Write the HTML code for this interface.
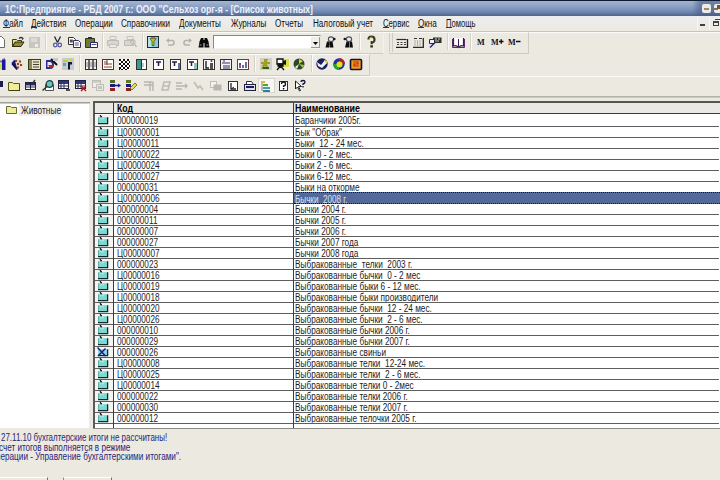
<!DOCTYPE html>
<html><head><meta charset="utf-8">
<style>
*{margin:0;padding:0;box-sizing:border-box}
html,body{width:720px;height:480px;overflow:hidden;background:#ece9e0;font-family:"Liberation Sans",sans-serif;font-size:10px;color:#000}
.a{position:absolute}
.t{display:inline-block;transform-origin:0 0;white-space:pre}
#title{left:0;top:0;width:720px;height:16px;background:linear-gradient(#0d1a33 0,#0d1a33 1px,#a6b5cd 1px,#93a7c6 5px,#7f97bf 9px,#6a80a8 13px,#556a92 15px,#556a92 16px)}
#title .t{position:absolute;left:5px;top:3px;font-weight:bold;font-size:11px;line-height:12px;color:#eef2fa;transform:scaleX(0.784)}
#menu{left:0;top:16px;width:720px;height:15px;background:linear-gradient(#eceef0,#ece9e0)}
#menu .t{position:absolute;top:2px;line-height:11px;transform:scaleX(0.81);color:#111}
#mline{left:0;top:31px;width:720px;height:1px;background:#c8c5ba}
#mline2{left:0;top:32px;width:720px;height:1px;background:#fbfaf6}
.hl{left:0;width:720px;height:1px}
.vl{width:1px}
#tree{left:0;top:104px;width:89px;height:324px;background:#fff}
#grid{left:93px;top:101px;width:627px;height:328px;background:#fff;border-left:2px solid;border-top:2px solid;border-color:#555 #555 #555 #5a5a5a}
#hdr{left:95px;top:103px;width:625px;height:10px;background:#ebe9e3}
.r{position:absolute;left:0;width:720px;height:11px}
.r .ic{position:absolute;left:95px;top:0;width:18px;height:11px;background:#f6f4f0}
.r .fi{position:absolute;left:2px;top:0px}
.r .c1 .t{color:#1c1c1c;position:absolute;left:117px;top:0px;line-height:11px;transform:scaleX(0.82)}
.r .c2 .t{color:#1c1c1c;position:absolute;left:295px;top:0px;line-height:11px;transform:scaleX(0.825)}
.rl{left:94px;width:625px;background:#5e5e5e}
.selbox{position:absolute;left:294px;width:426px;background:#52699a;border-top:1px dotted #101820;border-bottom:1px dotted #101820;z-index:2}
.selbox .t{position:absolute;left:1px;top:1px;line-height:11px;color:#d8e2f0;transform:scaleX(0.81)}
.tb{border-top:1px solid #fbfaf6;border-right:1px solid #cfccc2;border-bottom:1px solid #cfccc2}
.tb3{border-top:1px solid #fbfaf6}
.sep{width:2px;height:17px;border-left:1px solid #d4d2ca;border-right:1px solid #fbfaf6}
.mm{font-family:"Liberation Serif",serif;font-weight:bold;font-size:9px;line-height:11px;color:#101010;transform:scaleX(0.9);transform-origin:0 0}
svg.a{overflow:visible}
.msg{left:2px;line-height:10px;color:#27277a;transform-origin:0 0}
</style></head><body>
<div id="title" class="a"><span class="t">1С:Предприятие - РБД 2007 г.: ООО "Сельхоз орг-я - [Список животных]</span></div>
<div class="a" style="left:692px;top:1px;width:28px;height:15px;background:linear-gradient(90deg,rgba(70,90,135,0),rgba(70,90,135,.55) 8px)"></div>
<div class="a" style="left:702px;top:4px;width:9px;height:9px;border-radius:2px;background:#ecebe8"><div class="a" style="left:2px;top:4px;width:5px;height:2px;background:#a08a6a"></div></div>
<div class="a" style="left:714px;top:4px;width:9px;height:9px;border-radius:2px;background:#ecebe8"><div class="a" style="left:0px;top:4px;width:4px;height:2px;background:#8a7050"></div><div class="a" style="left:3px;top:1px;width:3px;height:4px;background:#6a5a40"></div></div>
<div id="menu" class="a">
<span class="t" style="left:3px">Файл</span>
<span class="t" style="left:31px">Действия</span>
<span class="t" style="left:75px">Операции</span>
<span class="t" style="left:121px">Справочники</span>
<span class="t" style="left:179px">Документы</span>
<span class="t" style="left:231px">Журналы</span>
<span class="t" style="left:275px">Отчеты</span>
<span class="t" style="left:313px">Налоговый учет</span>
<span class="t" style="left:383px;transform:scaleX(0.77)">Сервис</span>
<span class="t" style="left:418px">Окна</span>
<span class="t" style="left:446px;transform:scaleX(0.76)">Помощь</span>
<div class="a" style="left:3px;top:11px;width:7px;height:1px;background:#333"></div>
<div class="a" style="left:31px;top:11px;width:6px;height:1px;background:#333"></div>
<div class="a" style="left:383px;top:11px;width:6px;height:1px;background:#333"></div>
<div class="a" style="left:418px;top:11px;width:6px;height:1px;background:#333"></div>
<div class="a" style="left:446px;top:11px;width:6px;height:1px;background:#333"></div>
</div>
<div class="a" style="left:697px;top:17px;width:1px;height:13px;background:#f8f8f4"></div>
<div class="a" style="left:709px;top:17px;width:1px;height:13px;background:#f8f8f4"></div>
<div class="a" style="left:700px;top:24px;width:5px;height:2px;background:#404040"></div>
<div class="a" style="left:713px;top:21px;width:6px;height:5px;border:1px solid #404040;border-top-width:2px"></div>
<div class="a" style="left:715px;top:19px;width:5px;height:1px;background:#404040"></div>
<div id="mline" class="a"></div><div id="mline2" class="a"></div>
<!-- toolbar row separators -->
<div class="a hl" style="top:96px;background:#b4b2aa"></div>
<div class="a hl" style="top:97px;background:#cac8c0"></div>
<div class="a hl" style="top:102px;width:90px;background:#a09e98"></div>
<div class="a hl" style="top:103px;width:90px;background:#d0cec8"></div>

<!-- toolbar 1 -->
<div class="a tb" style="left:0;top:32px;width:384px;height:22px;border-right-color:#f4f2ec"></div>
<div class="a tb" style="left:389px;top:32px;width:140px;height:22px"></div>
<div class="a" style="left:389px;top:33px;width:1px;height:19px;background:#cdcac2"></div>
<div class="a" style="left:392px;top:33px;width:1px;height:19px;background:#cdcac2"></div>
<div class="a sep" style="left:45px;top:33px"></div>
<div class="a sep" style="left:102px;top:33px"></div>
<div class="a sep" style="left:142px;top:33px"></div>
<div class="a sep" style="left:359px;top:33px"></div>
<div class="a sep" style="left:447px;top:33px"></div>
<div class="a sep" style="left:470px;top:33px"></div>
<!-- new -->
<svg class="a" style="left:-6px;top:36px" width="12" height="12"><path d="M1.5 0.5h6l3 3v8h-9z" fill="#fff" stroke="#6a6a6a"/></svg>
<!-- open -->
<svg class="a" style="left:12px;top:36px" width="12" height="12"><path d="M0.5 3.5h4l1 1h4v2h-6l-3 4z" fill="#e8e890" stroke="#3a3a10"/><path d="M0.5 10.5l2.5-4.5h9l-3 4.5z" fill="#8c8c30" stroke="#2a2a10"/><path d="M7 2.5q2-2 4 0l-1 1" fill="none" stroke="#303060" stroke-width="1.2"/></svg>
<!-- save gray -->
<svg class="a" style="left:29px;top:37px" width="11" height="11"><rect x="0" y="0" width="11" height="11" fill="#c8c6c0"/><rect x="2" y="1" width="6" height="4" fill="#dcdad4"/><rect x="6" y="7" width="3" height="3" fill="#f0eee8"/></svg>
<!-- scissors -->
<svg class="a" style="left:53px;top:36px" width="9" height="12"><path d="M1.5 0.5l3 6M7.5 0.5l-3 6" stroke="#202030" stroke-width="1.3"/><circle cx="2.3" cy="9" r="1.8" fill="none" stroke="#5050a0" stroke-width="1.2"/><circle cx="6.7" cy="9" r="1.8" fill="none" stroke="#5050a0" stroke-width="1.2"/></svg>
<!-- copy -->
<svg class="a" style="left:68px;top:37px" width="13" height="11"><path d="M0.5 0.5h5l2 2v5h-7z" fill="#fff" stroke="#303030"/><path d="M1.8 2.5h3v3h-3z" fill="#505050"/><path d="M5.5 3.5h5l2 2v5h-7z" fill="#fff" stroke="#303050"/><path d="M6.8 6h4M6.8 8h4" stroke="#505080"/></svg>
<!-- paste -->
<svg class="a" style="left:85px;top:37px" width="13" height="11"><path d="M0.5 1.5h9v9h-9z" fill="#6b7a3a" stroke="#303818"/><rect x="3" y="0" width="4" height="2" fill="#303030"/><path d="M5.5 5.5h7v5h-7z" fill="#fff" stroke="#282860"/><path d="M6.5 7.5h5" stroke="#4a4a90"/></svg>
<!-- print gray -->
<svg class="a" style="left:107px;top:36px" width="13" height="12"><path d="M3 0.5h6v3h-6z" fill="#eceae4" stroke="#c4c2bc"/><path d="M0.5 4.5h11v5h-11z" fill="#d8d6d0" stroke="#bcbab4"/><path d="M2.5 8.5h7v3h-7z" fill="#eceae4" stroke="#c4c2bc"/></svg>
<svg class="a" style="left:124px;top:36px" width="13" height="12"><path d="M3 0.5h6v3h-6z" fill="#eceae4" stroke="#c4c2bc"/><path d="M0.5 4.5h9v5h-9z" fill="#d8d6d0" stroke="#bcbab4"/><circle cx="9" cy="6" r="2.3" fill="none" stroke="#b8b6b0"/><path d="M10.5 8l2 3" stroke="#b8b6b0" stroke-width="1.3"/></svg>
<!-- filter -->
<svg class="a" style="left:147px;top:36px" width="12" height="12"><rect x="0.5" y="0.5" width="11" height="11" fill="#8cc8d8" stroke="#1e2a34"/><path d="M1 1h4v10h-4z" fill="#b8e0ec"/><path d="M3 2.5h6l-2 3v4h-2v-4z" fill="#a8c830" stroke="#4a6010" stroke-width="0.8"/><rect x="4" y="1" width="4" height="1.5" fill="#d07020"/></svg>
<!-- undo/redo gray -->
<svg class="a" style="left:166px;top:38px" width="9" height="8"><path d="M1 2.5h5q2 0 2 2.2t-2 2.3h-4" fill="none" stroke="#b4b2ac" stroke-width="1.6"/><path d="M0 2.5l3-2.5v5z" fill="#b4b2ac"/></svg>
<svg class="a" style="left:183px;top:38px" width="9" height="8"><path d="M8 2.5h-5q-2 0-2 2.2t2 2.3h4" fill="none" stroke="#b4b2ac" stroke-width="1.6"/><path d="M9 2.5l-3-2.5v5z" fill="#b4b2ac"/></svg>
<!-- binoculars -->
<svg class="a" style="left:198px;top:37px" width="12" height="11"><path d="M0.5 10.5l1-6 1.5-3.5h2.5v9.5zM11.5 10.5l-1-6-1.5-3.5h-2.5v9.5z" fill="#0a0a0a"/><rect x="5" y="3" width="2" height="3" fill="#0a0a0a"/><path d="M1.5 8h2M8.5 8h2" stroke="#9a9a9a"/></svg>
<!-- combo -->
<div class="a" style="left:213px;top:35px;width:108px;height:14px;background:#fff;border-top:1px solid #8a8880;border-left:1px solid #8a8880;border-right:1px solid #e8e6e0;border-bottom:1px solid #f4f2ec"></div>
<div class="a" style="left:311px;top:37px;width:9px;height:11px;background:#f0eee8;border-right:1px solid #9a988f;border-bottom:1px solid #9a988f"></div>
<svg class="a" style="left:313px;top:42px" width="6" height="3"><path d="M0 0h5l-2.5 3z" fill="#000"/></svg>
<!-- binoc arrows -->
<svg class="a" style="left:325px;top:36px" width="12" height="12"><path d="M0.5 11.5l1.5-6h2.5v6zM8.5 11.5l-1-6h-2.5v6z" fill="#0c0c0c"/><path d="M4 6v3h1v-3z" fill="#404040"/><ellipse cx="6" cy="3.2" rx="2.6" ry="2.3" fill="none" stroke="#505060" stroke-width="1.1"/><circle cx="9.3" cy="3" r="1.3" fill="#101030"/></svg>
<svg class="a" style="left:343px;top:36px" width="12" height="12"><path d="M2 11.5l1.5-6h2.5v6zM10 11.5l-1-6h-2.5v6z" fill="#0c0c0c"/><ellipse cx="6" cy="3.2" rx="2.6" ry="2.3" fill="none" stroke="#505060" stroke-width="1.1"/><circle cx="1.8" cy="3" r="1.3" fill="#101030"/></svg>
<!-- ? -->
<svg class="a" style="left:367px;top:36px" width="9" height="12"><path d="M1.5 3.5q0-3 3-3t3 3-2.8 2.7v2" fill="none" stroke="#3e3e14" stroke-width="2.2"/><path d="M2.5 3q0.5-1.8 2-1.8" fill="none" stroke="#c8c060" stroke-width="0.8"/><rect x="3.3" y="9.3" width="2.6" height="2.2" fill="#2a2a0a"/></svg>
<!-- calc -->
<svg class="a" style="left:396px;top:38px" width="12" height="10"><path d="M0.5 1.5h10" stroke="#2a2a2a" stroke-width="1.2"/><path d="M1 4.5h2M4.5 4.5h2M8 4.5h2M1 6.5h2M4.5 6.5h2M8 6.5h2" stroke="#404040" stroke-width="1.1"/><path d="M0 9.3h11.5V1" fill="none" stroke="#1e1e1e" stroke-width="1.3"/></svg>
<svg class="a" style="left:413px;top:37px" width="11" height="11"><path d="M1 1.5h3M6 1.5h3" stroke="#303030" stroke-width="1.2"/><path d="M1.5 4h1M4 4h1M6.5 4h1M1.5 6h1M4 6h1M6.5 6h1M1.5 8h1M4 8h1M6.5 8h1" stroke="#707070"/><path d="M0 10.3h10.3V1" fill="none" stroke="#2a2a2a" stroke-width="1.3"/></svg>
<svg class="a" style="left:429px;top:37px" width="13" height="11"><path d="M4 0.5h8.5v5.5h-6l-2 2v-2h-0.5z" fill="#2e2e2e"/><path d="M6 2h2M9 2h2M6 4h4" stroke="#c8c8c8"/><path d="M0.5 2.5h5v4h-5z" fill="#f0f0f0" stroke="#2a2a2a"/><path d="M1 10.5l3.5-3.5" stroke="#2a2a9a" stroke-width="1.6"/></svg>
<!-- book -->
<svg class="a" style="left:452px;top:37px" width="13" height="11"><path d="M1.5 1v8q3-1 5 1.5 2-2.5 5-1.5v-8" fill="#fff" stroke="#3a1a4a" stroke-width="1.2"/><path d="M6.5 2v8" stroke="#3a1a4a"/><path d="M0.5 2v8.5h12v-8.5" fill="none" stroke="#5a2a6a"/></svg>
<!-- M -->
<div class="a mm" style="left:477px;top:37px">M</div>
<div class="a mm" style="left:491px;top:37px">M</div><svg class="a" style="left:499px;top:39px" width="5" height="5"><path d="M0 2.5h4.5M2.25 0.3v4.4" stroke="#101010" stroke-width="1.4"/></svg>
<div class="a mm" style="left:508px;top:37px">M</div><svg class="a" style="left:516px;top:40px" width="5" height="3"><path d="M0 1.5h4.5" stroke="#101010" stroke-width="1.5"/></svg>

<!-- toolbar row 2 -->
<div class="a tb" style="left:0;top:54px;width:370px;height:22px"></div>
<div class="a sep" style="left:79px;top:55px"></div>
<div class="a sep" style="left:254px;top:55px"></div>
<div class="a sep" style="left:311px;top:55px"></div>
<svg class="a" style="left:-6px;top:59px" width="12" height="11"><path d="M8 0.5h3.5v10.5h-3.5z" fill="#1818a0"/><path d="M8 0l3-0.5v1z" fill="#101060"/><path d="M0 1.5h8v2h-8z" fill="#707a80"/><path d="M2 4.5h6v6h-6z" fill="#c8e060"/></svg>
<svg class="a" style="left:11px;top:58px" width="13" height="12"><path d="M3 1.5l5-1 4.5 6.5-6 4.5z" fill="#e8d8c8"/><path d="M4 2h2v2h-2zM8 2.5h2v2h-2zM6 5h2v2h-2zM9 6h2v2h-2zM6 8.5h2v2h-2z" fill="#8a4a30"/><path d="M0.5 5l3-3.5 3 10z" fill="#1a1a7a"/><path d="M1 5.5l5 6" stroke="#0a0a50" stroke-width="1.6"/></svg>
<svg class="a" style="left:28px;top:59px" width="13" height="11"><rect x="0.5" y="0.5" width="12" height="10" fill="#e8e6c8" stroke="#3a3a20"/><rect x="1" y="1" width="3" height="9" fill="#8a8a50"/><path d="M5 3h6M5 5.5h6M5 8h6" stroke="#404030"/></svg>
<svg class="a" style="left:45px;top:58px" width="13" height="12"><path d="M1 2h4q4 0 4 4.5t-4 4.5h-4z" fill="#2a2aa0"/><path d="M2.5 4h2q2.5 0 2.5 2.5t-2.5 2.5h-2z" fill="#f0f0f0"/><path d="M3 7l3 4 3-4z" fill="#c02020"/><path d="M6 1l6 6" stroke="#101010" stroke-width="2"/><rect x="8" y="0" width="5" height="3" fill="#c8c8c8"/></svg>
<svg class="a" style="left:62px;top:58px" width="12" height="12"><rect x="0" y="0" width="12" height="12" fill="#c8cad0"/><path d="M1 2h4l1 2h-5z" fill="#b0d040"/><path d="M1 5h3v3h-3z" fill="#60a8b0"/><path d="M6 4h4v2.5h-2v5h-2z" fill="#101840"/><path d="M7 0h3v3h-3z" fill="#d0d840"/></svg>
<svg class="a" style="left:85px;top:59px" width="12" height="11"><rect x="0.5" y="0.5" width="11" height="10" fill="#f0f0f0" stroke="#303030"/><path d="M4 1v9M8 1v9" stroke="#303030" stroke-width="1.4"/><path d="M2 3v5M6 3v5M10 3v5" stroke="#8a8a8a"/></svg>
<svg class="a" style="left:102px;top:59px" width="12" height="11"><rect x="0.5" y="0.5" width="11" height="10" fill="#fff" stroke="#4a3030"/><path d="M2 3h3M2 5h8M2 8h8" stroke="#904030" stroke-width="1.2"/><path d="M5 1v5" stroke="#5a3a3a"/></svg>
<svg class="a" style="left:119px;top:59px" width="11" height="11"><rect width="11" height="11" fill="#fff"/><path d="M0 0h2v2h-2zM4 0h2v2h-2zM8 0h2v2h-2zM2 2h2v2h-2zM6 2h2v2h-2zM10 2h1v2h-1zM0 4h2v2h-2zM4 4h2v2h-2zM8 4h2v2h-2zM2 6h2v2h-2zM6 6h2v2h-2zM10 6h1v2h-1zM0 8h2v2h-2zM4 8h2v2h-2zM8 8h2v2h-2zM2 10h2v1h-2zM6 10h2v1h-2zM0 10h1v1h-1z" fill="#101010"/></svg>
<svg class="a" style="left:136px;top:59px" width="11" height="11"><rect x="0.5" y="0.5" width="10" height="10" fill="#fff" stroke="#303030"/><path d="M1 1h4v9h-4z" fill="#3a9a90"/><path d="M5.5 1v9" stroke="#303030"/><path d="M7 4v4" stroke="#909090"/></svg>
<svg class="a" style="left:153px;top:59px" width="11" height="11"><rect x="0.5" y="0.5" width="10" height="10" fill="#fff" stroke="#303030"/><path d="M3 3h5M5.5 3v4" stroke="#202040" stroke-width="1.5"/></svg>
<svg class="a" style="left:170px;top:59px" width="11" height="11"><rect x="0.5" y="0.5" width="10" height="10" fill="#fff" stroke="#303030"/><path d="M2 3h5M4.5 3v4" stroke="#202040" stroke-width="1.5"/><path d="M9 4v6" stroke="#3040a0" stroke-width="1.5"/></svg>
<svg class="a" style="left:187px;top:59px" width="11" height="11"><rect x="0.5" y="0.5" width="10" height="10" fill="#fff" stroke="#303030"/><path d="M2 3h5M4.5 3v4" stroke="#202040" stroke-width="1.5"/><path d="M7 5h3M7 7h3M7 9h3" stroke="#208080" stroke-width="1.2"/></svg>
<svg class="a" style="left:203px;top:59px" width="12" height="11"><rect x="0.5" y="0.5" width="11" height="10" fill="#f8f8f8" stroke="#303030"/><path d="M3 2v7h3" stroke="#202020" stroke-width="1.4" fill="none"/><path d="M7 4h3v6h-3z" fill="#505050"/><circle cx="8.5" cy="2" r="1" fill="#404040"/></svg>
<svg class="a" style="left:220px;top:59px" width="12" height="11"><rect x="0.5" y="0.5" width="11" height="10" fill="#f4f4f8" stroke="#303030"/><path d="M3 2h2M2 4h8M3 7h7M3 9h7" stroke="#303060" stroke-width="1.2"/></svg>
<svg class="a" style="left:237px;top:59px" width="12" height="11"><rect x="0.5" y="0.5" width="11" height="10" fill="#fff" stroke="#703838"/><path d="M3 4v5M6 6v3M9 3v6" stroke="#3a4aa0" stroke-width="1.6"/><path d="M3 4v2" stroke="#a03030" stroke-width="1.6"/></svg>
<svg class="a" style="left:260px;top:58px" width="12" height="12"><rect width="12" height="12" fill="#d0d0c8"/><path d="M4 1h4l-1 3h3v2h-3l2 5h-2l-2-3-2 3h-2l2-5h-2v-2h3z" fill="#a0a020"/><path d="M3 9h6v2h-6z" fill="#306030"/></svg>
<svg class="a" style="left:276px;top:58px" width="13" height="12"><rect x="6" y="1" width="7" height="8" fill="#d8e040"/><path d="M1 1h6v5h-6z" fill="#fff" stroke="#101010" stroke-width="1.3"/><path d="M2 6h5v2h-5zM4.5 8l-3.5 4M4.5 8l3.5 4" stroke="#101010" stroke-width="1.3" fill="#101010"/><path d="M7 3l3-1v5l-3-1z" fill="#101010"/></svg>
<svg class="a" style="left:293px;top:58px" width="12" height="12"><circle cx="6" cy="6" r="5.5" fill="#2a4a2a"/><path d="M6 6l0-5 4 2z" fill="#d8d040"/><path d="M6 6l-4 3 2 2z" fill="#f0f0e0"/><path d="M6 6l5 1-1 3z" fill="#b0c040"/></svg>
<svg class="a" style="left:316px;top:58px" width="12" height="12"><circle cx="6" cy="6" r="5.7" fill="#182060"/><path d="M1 4l4 3 4-5 2 3-5 5-4-2z" fill="#f0f0f8"/><path d="M8 2l3 1v3z" fill="#d8d040"/></svg>
<svg class="a" style="left:333px;top:58px" width="12" height="12"><circle cx="6" cy="6" r="5.7" fill="#2030a0"/><path d="M6 6v-6a6 6 0 0 1 6 6z" fill="#b02020"/><path d="M6 6h-6a6 6 0 0 0 6 6z" fill="#20a030"/><circle cx="6.5" cy="6.5" r="3" fill="#e0e020"/></svg>
<svg class="a" style="left:350px;top:59px" width="12" height="11"><rect x="0.5" y="0.5" width="11" height="10" rx="1" fill="#e8a020" stroke="#101030" stroke-width="1.6"/><path d="M3 3h5v2h-4v2h5" stroke="#d02010" stroke-width="1.2" fill="none"/></svg>

<!-- toolbar row 3 -->
<div class="a tb3" style="left:0;top:76px;width:720px;height:21px"></div>
<svg class="a" style="left:-8px;top:81px" width="11" height="6"><rect width="11" height="6" fill="#1a1a5a"/></svg>
<svg class="a" style="left:8px;top:81px" width="12" height="10"><path d="M0.5 1.5h4l1 1h6v7h-11z" fill="#f0ec98" stroke="#5a5a20"/><path d="M1 9.5h11M11.5 3v7" stroke="#404010"/></svg>
<svg class="a" style="left:25px;top:80px" width="11" height="10"><rect x="0.5" y="2.5" width="10" height="7" fill="#fff" stroke="#202040"/><path d="M1 3h9v2.5h-9z" fill="#2a2a6a"/><path d="M5.5 3v6M1 7h9" stroke="#202040"/><path d="M7 4l3-4" stroke="#303030" stroke-width="1.3"/></svg>
<svg class="a" style="left:42px;top:80px" width="12" height="11"><path d="M3.5 4.5h8v6h-8z" fill="#fff" stroke="#505050"/><circle cx="7.5" cy="4" r="3.3" fill="#60c8c8" stroke="#204040" stroke-width="1.2"/><path d="M5 6.5l-4.5 4" stroke="#303030" stroke-width="1.5"/></svg>
<svg class="a" style="left:58px;top:80px" width="12" height="11"><rect x="0.5" y="0.5" width="10" height="8" fill="#fff" stroke="#202040"/><path d="M1 1h9v3h-9z" fill="#2a3a8a"/><path d="M3 1v7M6 1v7M1 6h9" stroke="#303050"/><path d="M8 10h4" stroke="#101010" stroke-width="1.4"/></svg>
<svg class="a" style="left:75px;top:80px" width="12" height="11"><rect x="0.5" y="0.5" width="10" height="8" fill="#fff" stroke="#202040"/><path d="M1 1h9v3h-9z" fill="#2a3a8a"/><path d="M3 1v7M6 1v7M1 6h9" stroke="#303050"/><path d="M6 6l5 5M11 6l-5 5" stroke="#c01010" stroke-width="1.4"/></svg>
<svg class="a" style="left:92px;top:80px" width="12" height="11"><rect x="0.5" y="0.5" width="8" height="7" fill="#f0eee8" stroke="#c0beb8"/><path d="M1 1h7v2h-7z" fill="#d0cec8"/><rect x="4.5" y="4.5" width="7" height="6" fill="#e8e6e0" stroke="#c0beb8"/><rect x="6" y="6" width="4" height="3" fill="#c8c6c0"/></svg>
<svg class="a" style="left:109px;top:80px" width="12" height="11"><rect x="1" y="0" width="5" height="3" fill="#506a20"/><rect x="1" y="4" width="5" height="3" fill="#1a1a7a"/><rect x="1" y="8" width="5" height="3" fill="#902020"/><path d="M6 5.5h4" stroke="#1a1a8a" stroke-width="1.5"/><path d="M12 5.5l-3-2v4z" fill="#1a1a8a"/></svg>
<svg class="a" style="left:126px;top:80px" width="12" height="11"><rect x="0" y="0" width="5" height="3" fill="#607a20"/><rect x="0" y="4" width="5" height="3" fill="#1a1a7a"/><rect x="0" y="8" width="5" height="3" fill="#902020"/><path d="M6 10l5-5-2-2-5 5z" fill="#e0e060" stroke="#606010" stroke-width="0.8"/></svg>
<svg class="a" style="left:144px;top:81px" width="10" height="10"><path d="M0 1h9M0 4h9M6 1v9M9 1v9" stroke="#b8b6b0" stroke-width="1.5"/></svg>
<svg class="a" style="left:160px;top:81px" width="11" height="10"><path d="M2 9l2-8h6l-2 8zM3 5h6" fill="none" stroke="#bcbab4" stroke-width="1.5"/></svg>
<svg class="a" style="left:176px;top:81px" width="12" height="10"><path d="M0 2h6M0 5h9M0 8h6" stroke="#b8b6b0" stroke-width="1.5"/><path d="M12 5l-3-3v6z" fill="#b8b6b0"/></svg>
<svg class="a" style="left:193px;top:81px" width="11" height="10"><path d="M1 1l4 6 2-2 3 4" fill="none" stroke="#bcbab4" stroke-width="1.5"/></svg>
<svg class="a" style="left:210px;top:81px" width="12" height="10"><rect x="0.5" y="0.5" width="6" height="6" fill="#f4f2ec" stroke="#c0beb8"/><rect x="3.5" y="3.5" width="8" height="6" fill="#b8b6b0"/></svg>
<svg class="a" style="left:228px;top:81px" width="10" height="10"><rect x="0.5" y="0.5" width="9" height="9" fill="#fff" stroke="#303030"/><path d="M3 2v6h5" stroke="#202020" stroke-width="1.3" fill="none"/><path d="M3 8l3-2" stroke="#202020"/></svg>
<svg class="a" style="left:244px;top:81px" width="12" height="10"><path d="M2.5 0.5h5l2 3h-7z" fill="#fff" stroke="#303040"/><rect x="0.5" y="3.5" width="11" height="6" fill="#e0e0e8" stroke="#202040"/><path d="M2 6h8" stroke="#1a1a6a" stroke-width="2"/></svg>
<div class="a" style="left:258px;top:78px;width:17px;height:15px;background:#f8f7f2;border:1px solid #d8d6ce"></div>
<svg class="a" style="left:261px;top:81px" width="11" height="11"><rect x="0" y="0" width="4" height="2" fill="#d0c040"/><rect x="2" y="3" width="5" height="2" fill="#50a040"/><rect x="2" y="6" width="7" height="2" fill="#40a0b0"/><rect x="2" y="9" width="7" height="2" fill="#3080a0"/><path d="M1 2v8" stroke="#808060"/></svg>
<svg class="a" style="left:279px;top:81px" width="9" height="10"><rect x="0.5" y="0.5" width="8" height="9" fill="#fff" stroke="#303030"/><path d="M2.5 3q0-2 2-2t2 2-2 2v1" fill="none" stroke="#101020" stroke-width="1.3"/><rect x="3.8" y="7" width="1.5" height="1.5" fill="#101020"/></svg>
<svg class="a" style="left:295px;top:80px" width="11" height="11"><path d="M0.5 1v8l2-2 2 4 1-0.5-2-4h3z" fill="#fff" stroke="#202020"/><path d="M6 2q0-1.5 2-1.5t2 1.5-2 2v1" fill="none" stroke="#101040" stroke-width="1.3"/><rect x="7.3" y="6" width="1.4" height="1.4" fill="#101040"/></svg>

<div id="tree" class="a"></div>
<div class="a" style="left:19px;top:104px;width:43px;height:12px;background:#f0f0ee"></div>
<div id="grid" class="a"></div>
<div id="hdr" class="a"></div>
<div class="a" style="left:117px;top:103px;line-height:11px;font-weight:bold"><span class="t" style="transform:scaleX(0.87)">Код</span></div>
<div class="a" style="left:295px;top:103px;line-height:11px;font-weight:bold"><span class="t" style="transform:scaleX(0.885)">Наименование</span></div>
<div class="a hl" style="left:94px;top:113px;width:626px;background:#3a3a3a"></div>
<div class="r" style="top:115px;height:11px"><div class="ic" style="height:11px"><svg class="fi" width="12" height="10" viewBox="0 0 12 10"><path d="M1 2.2h9.5v6.2h-9.5z" fill="#7ed8d2"/><path d="M1.5 2.4v5.8" stroke="#5aaaa6" stroke-width="0.9"/><path d="M3 3.7h4" stroke="#b0ece6" stroke-width="1"/><path d="M1 8.7h10.2M10.6 2.2v7" stroke="#0e2a2a" stroke-width="1.3"/><path d="M3 0.2l1.6 2" stroke="#101818" stroke-width="1.4"/></svg></div><div class="c1"><span class="t">000000019</span></div><div class="c2"><span class="t">Баранчики 2005г.</span></div></div>
<div class="r" style="top:127px;height:10px"><div class="ic" style="height:10px"><svg class="fi" width="12" height="10" viewBox="0 0 12 10"><path d="M1 2.2h9.5v6.2h-9.5z" fill="#7ed8d2"/><path d="M1.5 2.4v5.8" stroke="#5aaaa6" stroke-width="0.9"/><path d="M3 3.7h4" stroke="#b0ece6" stroke-width="1"/><path d="M1 8.7h10.2M10.6 2.2v7" stroke="#0e2a2a" stroke-width="1.3"/><path d="M3 0.2l1.6 2" stroke="#101818" stroke-width="1.4"/></svg></div><div class="c1"><span class="t">Ц00000001</span></div><div class="c2"><span class="t">Бык "Обрак"</span></div></div>
<div class="r" style="top:138px;height:10px"><div class="ic" style="height:10px"><svg class="fi" width="12" height="10" viewBox="0 0 12 10"><path d="M1 2.2h9.5v6.2h-9.5z" fill="#7ed8d2"/><path d="M1.5 2.4v5.8" stroke="#5aaaa6" stroke-width="0.9"/><path d="M3 3.7h4" stroke="#b0ece6" stroke-width="1"/><path d="M1 8.7h10.2M10.6 2.2v7" stroke="#0e2a2a" stroke-width="1.3"/><path d="M3 0.2l1.6 2" stroke="#101818" stroke-width="1.4"/></svg></div><div class="c1"><span class="t">Ц00000011</span></div><div class="c2"><span class="t">Быки&nbsp;&nbsp;12&nbsp;-&nbsp;24&nbsp;мес.</span></div></div>
<div class="r" style="top:149px;height:10px"><div class="ic" style="height:10px"><svg class="fi" width="12" height="10" viewBox="0 0 12 10"><path d="M1 2.2h9.5v6.2h-9.5z" fill="#7ed8d2"/><path d="M1.5 2.4v5.8" stroke="#5aaaa6" stroke-width="0.9"/><path d="M3 3.7h4" stroke="#b0ece6" stroke-width="1"/><path d="M1 8.7h10.2M10.6 2.2v7" stroke="#0e2a2a" stroke-width="1.3"/><path d="M3 0.2l1.6 2" stroke="#101818" stroke-width="1.4"/></svg></div><div class="c1"><span class="t">Ц00000022</span></div><div class="c2"><span class="t">Быки 0 - 2 мес.</span></div></div>
<div class="r" style="top:160px;height:10px"><div class="ic" style="height:10px"><svg class="fi" width="12" height="10" viewBox="0 0 12 10"><path d="M1 2.2h9.5v6.2h-9.5z" fill="#7ed8d2"/><path d="M1.5 2.4v5.8" stroke="#5aaaa6" stroke-width="0.9"/><path d="M3 3.7h4" stroke="#b0ece6" stroke-width="1"/><path d="M1 8.7h10.2M10.6 2.2v7" stroke="#0e2a2a" stroke-width="1.3"/><path d="M3 0.2l1.6 2" stroke="#101818" stroke-width="1.4"/></svg></div><div class="c1"><span class="t">Ц00000024</span></div><div class="c2"><span class="t">Быки 2 - 6 мес.</span></div></div>
<div class="r" style="top:171px;height:10px"><div class="ic" style="height:10px"><svg class="fi" width="12" height="10" viewBox="0 0 12 10"><path d="M1 2.2h9.5v6.2h-9.5z" fill="#7ed8d2"/><path d="M1.5 2.4v5.8" stroke="#5aaaa6" stroke-width="0.9"/><path d="M3 3.7h4" stroke="#b0ece6" stroke-width="1"/><path d="M1 8.7h10.2M10.6 2.2v7" stroke="#0e2a2a" stroke-width="1.3"/><path d="M3 0.2l1.6 2" stroke="#101818" stroke-width="1.4"/></svg></div><div class="c1"><span class="t">Ц00000027</span></div><div class="c2"><span class="t">Быки 6-12 мес.</span></div></div>
<div class="r" style="top:182px;height:10px"><div class="ic" style="height:10px"><svg class="fi" width="12" height="10" viewBox="0 0 12 10"><path d="M1 2.2h9.5v6.2h-9.5z" fill="#7ed8d2"/><path d="M1.5 2.4v5.8" stroke="#5aaaa6" stroke-width="0.9"/><path d="M3 3.7h4" stroke="#b0ece6" stroke-width="1"/><path d="M1 8.7h10.2M10.6 2.2v7" stroke="#0e2a2a" stroke-width="1.3"/><path d="M3 0.2l1.6 2" stroke="#101818" stroke-width="1.4"/></svg></div><div class="c1"><span class="t">000000031</span></div><div class="c2"><span class="t">Быки на откорме</span></div></div>
<div class="r" style="top:193px;height:10px"><div class="ic" style="height:10px"><svg class="fi" width="12" height="10" viewBox="0 0 12 10"><path d="M1 2.2h9.5v6.2h-9.5z" fill="#7ed8d2"/><path d="M1.5 2.4v5.8" stroke="#5aaaa6" stroke-width="0.9"/><path d="M3 3.7h4" stroke="#b0ece6" stroke-width="1"/><path d="M1 8.7h10.2M10.6 2.2v7" stroke="#0e2a2a" stroke-width="1.3"/><path d="M3 0.2l1.6 2" stroke="#101818" stroke-width="1.4"/></svg></div><div class="c1"><span class="t">Ц00000006</span></div></div><div class="selbox" style="top:192px;height:12px"><span class="t">Бычки&nbsp;&nbsp;2008&nbsp;г.</span></div>
<div class="r" style="top:204px;height:10px"><div class="ic" style="height:10px"><svg class="fi" width="12" height="10" viewBox="0 0 12 10"><path d="M1 2.2h9.5v6.2h-9.5z" fill="#7ed8d2"/><path d="M1.5 2.4v5.8" stroke="#5aaaa6" stroke-width="0.9"/><path d="M3 3.7h4" stroke="#b0ece6" stroke-width="1"/><path d="M1 8.7h10.2M10.6 2.2v7" stroke="#0e2a2a" stroke-width="1.3"/><path d="M3 0.2l1.6 2" stroke="#101818" stroke-width="1.4"/></svg></div><div class="c1"><span class="t">000000004</span></div><div class="c2"><span class="t">Бычки 2004 г.</span></div></div>
<div class="r" style="top:215px;height:10px"><div class="ic" style="height:10px"><svg class="fi" width="12" height="10" viewBox="0 0 12 10"><path d="M1 2.2h9.5v6.2h-9.5z" fill="#7ed8d2"/><path d="M1.5 2.4v5.8" stroke="#5aaaa6" stroke-width="0.9"/><path d="M3 3.7h4" stroke="#b0ece6" stroke-width="1"/><path d="M1 8.7h10.2M10.6 2.2v7" stroke="#0e2a2a" stroke-width="1.3"/><path d="M3 0.2l1.6 2" stroke="#101818" stroke-width="1.4"/></svg></div><div class="c1"><span class="t">000000011</span></div><div class="c2"><span class="t">Бычки 2005 г.</span></div></div>
<div class="r" style="top:226px;height:10px"><div class="ic" style="height:10px"><svg class="fi" width="12" height="10" viewBox="0 0 12 10"><path d="M1 2.2h9.5v6.2h-9.5z" fill="#7ed8d2"/><path d="M1.5 2.4v5.8" stroke="#5aaaa6" stroke-width="0.9"/><path d="M3 3.7h4" stroke="#b0ece6" stroke-width="1"/><path d="M1 8.7h10.2M10.6 2.2v7" stroke="#0e2a2a" stroke-width="1.3"/><path d="M3 0.2l1.6 2" stroke="#101818" stroke-width="1.4"/></svg></div><div class="c1"><span class="t">000000007</span></div><div class="c2"><span class="t">Бычки 2006 г.</span></div></div>
<div class="r" style="top:237px;height:10px"><div class="ic" style="height:10px"><svg class="fi" width="12" height="10" viewBox="0 0 12 10"><path d="M1 2.2h9.5v6.2h-9.5z" fill="#7ed8d2"/><path d="M1.5 2.4v5.8" stroke="#5aaaa6" stroke-width="0.9"/><path d="M3 3.7h4" stroke="#b0ece6" stroke-width="1"/><path d="M1 8.7h10.2M10.6 2.2v7" stroke="#0e2a2a" stroke-width="1.3"/><path d="M3 0.2l1.6 2" stroke="#101818" stroke-width="1.4"/></svg></div><div class="c1"><span class="t">000000027</span></div><div class="c2"><span class="t">Бычки 2007 года</span></div></div>
<div class="r" style="top:248px;height:10px"><div class="ic" style="height:10px"><svg class="fi" width="12" height="10" viewBox="0 0 12 10"><path d="M1 2.2h9.5v6.2h-9.5z" fill="#7ed8d2"/><path d="M1.5 2.4v5.8" stroke="#5aaaa6" stroke-width="0.9"/><path d="M3 3.7h4" stroke="#b0ece6" stroke-width="1"/><path d="M1 8.7h10.2M10.6 2.2v7" stroke="#0e2a2a" stroke-width="1.3"/><path d="M3 0.2l1.6 2" stroke="#101818" stroke-width="1.4"/></svg></div><div class="c1"><span class="t">Ц00000007</span></div><div class="c2"><span class="t">Бычки 2008 года</span></div></div>
<div class="r" style="top:259px;height:10px"><div class="ic" style="height:10px"><svg class="fi" width="12" height="10" viewBox="0 0 12 10"><path d="M1 2.2h9.5v6.2h-9.5z" fill="#7ed8d2"/><path d="M1.5 2.4v5.8" stroke="#5aaaa6" stroke-width="0.9"/><path d="M3 3.7h4" stroke="#b0ece6" stroke-width="1"/><path d="M1 8.7h10.2M10.6 2.2v7" stroke="#0e2a2a" stroke-width="1.3"/><path d="M3 0.2l1.6 2" stroke="#101818" stroke-width="1.4"/></svg></div><div class="c1"><span class="t">000000023</span></div><div class="c2"><span class="t">Выбракованные&nbsp;&nbsp;телки&nbsp;&nbsp;2003&nbsp;г.</span></div></div>
<div class="r" style="top:270px;height:10px"><div class="ic" style="height:10px"><svg class="fi" width="12" height="10" viewBox="0 0 12 10"><path d="M1 2.2h9.5v6.2h-9.5z" fill="#7ed8d2"/><path d="M1.5 2.4v5.8" stroke="#5aaaa6" stroke-width="0.9"/><path d="M3 3.7h4" stroke="#b0ece6" stroke-width="1"/><path d="M1 8.7h10.2M10.6 2.2v7" stroke="#0e2a2a" stroke-width="1.3"/><path d="M3 0.2l1.6 2" stroke="#101818" stroke-width="1.4"/></svg></div><div class="c1"><span class="t">Ц00000016</span></div><div class="c2"><span class="t">Выбракованные&nbsp;бычки&nbsp;&nbsp;0&nbsp;-&nbsp;2&nbsp;мес</span></div></div>
<div class="r" style="top:281px;height:10px"><div class="ic" style="height:10px"><svg class="fi" width="12" height="10" viewBox="0 0 12 10"><path d="M1 2.2h9.5v6.2h-9.5z" fill="#7ed8d2"/><path d="M1.5 2.4v5.8" stroke="#5aaaa6" stroke-width="0.9"/><path d="M3 3.7h4" stroke="#b0ece6" stroke-width="1"/><path d="M1 8.7h10.2M10.6 2.2v7" stroke="#0e2a2a" stroke-width="1.3"/><path d="M3 0.2l1.6 2" stroke="#101818" stroke-width="1.4"/></svg></div><div class="c1"><span class="t">Ц00000019</span></div><div class="c2"><span class="t">Выбракованные быки 6 - 12 мес.</span></div></div>
<div class="r" style="top:292px;height:10px"><div class="ic" style="height:10px"><svg class="fi" width="12" height="10" viewBox="0 0 12 10"><path d="M1 2.2h9.5v6.2h-9.5z" fill="#7ed8d2"/><path d="M1.5 2.4v5.8" stroke="#5aaaa6" stroke-width="0.9"/><path d="M3 3.7h4" stroke="#b0ece6" stroke-width="1"/><path d="M1 8.7h10.2M10.6 2.2v7" stroke="#0e2a2a" stroke-width="1.3"/><path d="M3 0.2l1.6 2" stroke="#101818" stroke-width="1.4"/></svg></div><div class="c1"><span class="t">Ц00000018</span></div><div class="c2"><span class="t">Выбракованные быки производители</span></div></div>
<div class="r" style="top:303px;height:10px"><div class="ic" style="height:10px"><svg class="fi" width="12" height="10" viewBox="0 0 12 10"><path d="M1 2.2h9.5v6.2h-9.5z" fill="#7ed8d2"/><path d="M1.5 2.4v5.8" stroke="#5aaaa6" stroke-width="0.9"/><path d="M3 3.7h4" stroke="#b0ece6" stroke-width="1"/><path d="M1 8.7h10.2M10.6 2.2v7" stroke="#0e2a2a" stroke-width="1.3"/><path d="M3 0.2l1.6 2" stroke="#101818" stroke-width="1.4"/></svg></div><div class="c1"><span class="t">Ц00000020</span></div><div class="c2"><span class="t">Выбракованные&nbsp;бычки&nbsp;&nbsp;12&nbsp;-&nbsp;24&nbsp;мес.</span></div></div>
<div class="r" style="top:314px;height:10px"><div class="ic" style="height:10px"><svg class="fi" width="12" height="10" viewBox="0 0 12 10"><path d="M1 2.2h9.5v6.2h-9.5z" fill="#7ed8d2"/><path d="M1.5 2.4v5.8" stroke="#5aaaa6" stroke-width="0.9"/><path d="M3 3.7h4" stroke="#b0ece6" stroke-width="1"/><path d="M1 8.7h10.2M10.6 2.2v7" stroke="#0e2a2a" stroke-width="1.3"/><path d="M3 0.2l1.6 2" stroke="#101818" stroke-width="1.4"/></svg></div><div class="c1"><span class="t">Ц00000026</span></div><div class="c2"><span class="t">Выбракованные&nbsp;бычки&nbsp;&nbsp;2&nbsp;-&nbsp;6&nbsp;мес.</span></div></div>
<div class="r" style="top:325px;height:10px"><div class="ic" style="height:10px"><svg class="fi" width="12" height="10" viewBox="0 0 12 10"><path d="M1 2.2h9.5v6.2h-9.5z" fill="#7ed8d2"/><path d="M1.5 2.4v5.8" stroke="#5aaaa6" stroke-width="0.9"/><path d="M3 3.7h4" stroke="#b0ece6" stroke-width="1"/><path d="M1 8.7h10.2M10.6 2.2v7" stroke="#0e2a2a" stroke-width="1.3"/><path d="M3 0.2l1.6 2" stroke="#101818" stroke-width="1.4"/></svg></div><div class="c1"><span class="t">000000010</span></div><div class="c2"><span class="t">Выбракованные бычки 2006 г.</span></div></div>
<div class="r" style="top:336px;height:10px"><div class="ic" style="height:10px"><svg class="fi" width="12" height="10" viewBox="0 0 12 10"><path d="M1 2.2h9.5v6.2h-9.5z" fill="#7ed8d2"/><path d="M1.5 2.4v5.8" stroke="#5aaaa6" stroke-width="0.9"/><path d="M3 3.7h4" stroke="#b0ece6" stroke-width="1"/><path d="M1 8.7h10.2M10.6 2.2v7" stroke="#0e2a2a" stroke-width="1.3"/><path d="M3 0.2l1.6 2" stroke="#101818" stroke-width="1.4"/></svg></div><div class="c1"><span class="t">000000029</span></div><div class="c2"><span class="t">Выбракованные бычки 2007 г.</span></div></div>
<div class="r" style="top:347px;height:10px"><div class="ic" style="height:10px"><svg class="fi" width="12" height="10" viewBox="0 0 12 10"><path d="M1 2.2h9.5v6.2h-9.5z" fill="#8cd8e4"/><path d="M1 8.7h10.2M10.6 2.2v7" stroke="#0e2a2a" stroke-width="1.3"/><path d="M0.5 0.5l8 8.5M8.5 1.5l-7.5 7.5" stroke="#1a1a80" stroke-width="1.5"/></svg></div><div class="c1"><span class="t">000000026</span></div><div class="c2"><span class="t">Выбракованные свиньи</span></div></div>
<div class="r" style="top:358px;height:10px"><div class="ic" style="height:10px"><svg class="fi" width="12" height="10" viewBox="0 0 12 10"><path d="M1 2.2h9.5v6.2h-9.5z" fill="#7ed8d2"/><path d="M1.5 2.4v5.8" stroke="#5aaaa6" stroke-width="0.9"/><path d="M3 3.7h4" stroke="#b0ece6" stroke-width="1"/><path d="M1 8.7h10.2M10.6 2.2v7" stroke="#0e2a2a" stroke-width="1.3"/><path d="M3 0.2l1.6 2" stroke="#101818" stroke-width="1.4"/></svg></div><div class="c1"><span class="t">Ц00000008</span></div><div class="c2"><span class="t">Выбракованные&nbsp;телки&nbsp;&nbsp;12-24&nbsp;мес.</span></div></div>
<div class="r" style="top:369px;height:10px"><div class="ic" style="height:10px"><svg class="fi" width="12" height="10" viewBox="0 0 12 10"><path d="M1 2.2h9.5v6.2h-9.5z" fill="#7ed8d2"/><path d="M1.5 2.4v5.8" stroke="#5aaaa6" stroke-width="0.9"/><path d="M3 3.7h4" stroke="#b0ece6" stroke-width="1"/><path d="M1 8.7h10.2M10.6 2.2v7" stroke="#0e2a2a" stroke-width="1.3"/><path d="M3 0.2l1.6 2" stroke="#101818" stroke-width="1.4"/></svg></div><div class="c1"><span class="t">Ц00000025</span></div><div class="c2"><span class="t">Выбракованные&nbsp;телки&nbsp;&nbsp;2&nbsp;-&nbsp;6&nbsp;мес.</span></div></div>
<div class="r" style="top:380px;height:10px"><div class="ic" style="height:10px"><svg class="fi" width="12" height="10" viewBox="0 0 12 10"><path d="M1 2.2h9.5v6.2h-9.5z" fill="#7ed8d2"/><path d="M1.5 2.4v5.8" stroke="#5aaaa6" stroke-width="0.9"/><path d="M3 3.7h4" stroke="#b0ece6" stroke-width="1"/><path d="M1 8.7h10.2M10.6 2.2v7" stroke="#0e2a2a" stroke-width="1.3"/><path d="M3 0.2l1.6 2" stroke="#101818" stroke-width="1.4"/></svg></div><div class="c1"><span class="t">Ц00000014</span></div><div class="c2"><span class="t">Выбракованные телки 0 - 2мес</span></div></div>
<div class="r" style="top:391px;height:10px"><div class="ic" style="height:10px"><svg class="fi" width="12" height="10" viewBox="0 0 12 10"><path d="M1 2.2h9.5v6.2h-9.5z" fill="#7ed8d2"/><path d="M1.5 2.4v5.8" stroke="#5aaaa6" stroke-width="0.9"/><path d="M3 3.7h4" stroke="#b0ece6" stroke-width="1"/><path d="M1 8.7h10.2M10.6 2.2v7" stroke="#0e2a2a" stroke-width="1.3"/><path d="M3 0.2l1.6 2" stroke="#101818" stroke-width="1.4"/></svg></div><div class="c1"><span class="t">000000022</span></div><div class="c2"><span class="t">Выбракованные телки 2006 г.</span></div></div>
<div class="r" style="top:402px;height:10px"><div class="ic" style="height:10px"><svg class="fi" width="12" height="10" viewBox="0 0 12 10"><path d="M1 2.2h9.5v6.2h-9.5z" fill="#7ed8d2"/><path d="M1.5 2.4v5.8" stroke="#5aaaa6" stroke-width="0.9"/><path d="M3 3.7h4" stroke="#b0ece6" stroke-width="1"/><path d="M1 8.7h10.2M10.6 2.2v7" stroke="#0e2a2a" stroke-width="1.3"/><path d="M3 0.2l1.6 2" stroke="#101818" stroke-width="1.4"/></svg></div><div class="c1"><span class="t">000000030</span></div><div class="c2"><span class="t">Выбракованные телки 2007 г.</span></div></div>
<div class="r" style="top:413px;height:10px"><div class="ic" style="height:10px"><svg class="fi" width="12" height="10" viewBox="0 0 12 10"><path d="M1 2.2h9.5v6.2h-9.5z" fill="#7ed8d2"/><path d="M1.5 2.4v5.8" stroke="#5aaaa6" stroke-width="0.9"/><path d="M3 3.7h4" stroke="#b0ece6" stroke-width="1"/><path d="M1 8.7h10.2M10.6 2.2v7" stroke="#0e2a2a" stroke-width="1.3"/><path d="M3 0.2l1.6 2" stroke="#101818" stroke-width="1.4"/></svg></div><div class="c1"><span class="t">000000012</span></div><div class="c2"><span class="t">Выбракованные телочки 2005 г.</span></div></div>
<div class="a hl rl" style="top:126px"></div>
<div class="a hl rl" style="top:137px"></div>
<div class="a hl rl" style="top:148px"></div>
<div class="a hl rl" style="top:159px"></div>
<div class="a hl rl" style="top:170px"></div>
<div class="a hl rl" style="top:181px"></div>
<div class="a hl rl" style="top:192px"></div>
<div class="a hl rl" style="top:203px"></div>
<div class="a hl rl" style="top:214px"></div>
<div class="a hl rl" style="top:225px"></div>
<div class="a hl rl" style="top:236px"></div>
<div class="a hl rl" style="top:247px"></div>
<div class="a hl rl" style="top:258px"></div>
<div class="a hl rl" style="top:269px"></div>
<div class="a hl rl" style="top:280px"></div>
<div class="a hl rl" style="top:291px"></div>
<div class="a hl rl" style="top:302px"></div>
<div class="a hl rl" style="top:313px"></div>
<div class="a hl rl" style="top:324px"></div>
<div class="a hl rl" style="top:335px"></div>
<div class="a hl rl" style="top:346px"></div>
<div class="a hl rl" style="top:357px"></div>
<div class="a hl rl" style="top:368px"></div>
<div class="a hl rl" style="top:379px"></div>
<div class="a hl rl" style="top:390px"></div>
<div class="a hl rl" style="top:401px"></div>
<div class="a hl rl" style="top:412px"></div>
<div class="a hl rl" style="top:423px"></div>
<div class="a vl" style="left:113px;top:103px;height:326px;background:#3c3c3c"></div>
<div class="a vl" style="left:293px;top:103px;height:326px;background:#3c3c3c"></div>
<div class="a hl" style="left:93px;top:428px;width:627px;background:#8e8c86"></div>

<div class="a" style="left:6px;top:105px"><svg width="11" height="9" viewBox="0 0 11 9"><path d="M0.5 1.5h4l1 1h5v6h-10z" fill="#ecec9c" stroke="#6b6b2a"/></svg></div>
<div class="a" style="left:21px;top:105px;line-height:11px;color:#1c1c1c"><span class="t" style="transform:scaleX(0.83)">Животные</span></div>

<div class="a msg" style="top:433px;left:1px"><span class="t" style="transform:scaleX(0.795)">27.11.10 бухгалтерские итоги не рассчитаны!</span></div>
<div class="a msg" style="top:443px;left:-1px"><span class="t" style="transform:scaleX(0.81)">счет итогов выполняется в режиме</span></div>
<div class="a msg" style="top:452px;left:-4px"><span class="t" style="transform:scaleX(0.82)">перации - Управление бухгалтерскими итогами".</span></div>
<div class="a" style="left:0;top:477px;width:48px;height:3px;border-top:1px solid #fdfdfb;border-right:1px solid #707070"></div>
<div class="a" style="left:63px;top:477px;width:49px;height:3px;border-top:1px solid #fdfdfb;border-left:1px solid #8a8a8a;border-right:1px solid #707070"></div>
</body></html>
